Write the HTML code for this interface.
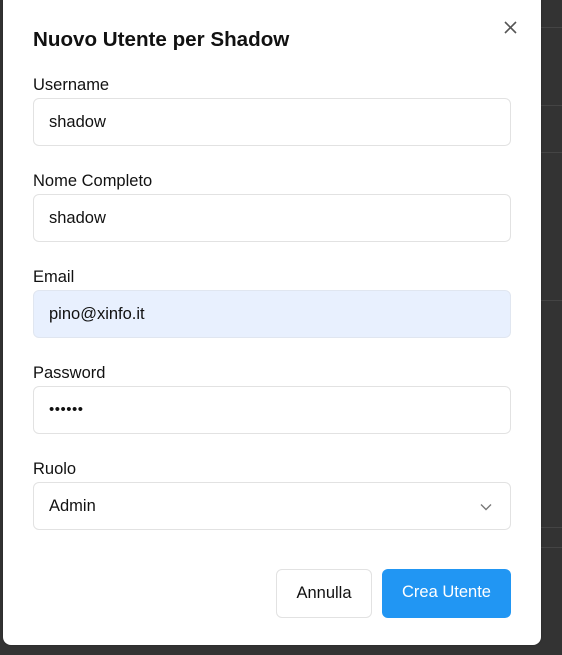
<!DOCTYPE html>
<html><head><style>
*{box-sizing:border-box;margin:0;padding:0}
html,body{width:562px;height:655px;overflow:hidden;background:#333;font-family:"Liberation Sans",Arial,sans-serif}
.line{position:absolute;left:541px;right:0;height:1px;background:#444}
.modal{position:absolute;left:3px;top:-10px;width:538px;height:655px;background:#fff;border-radius:8px;box-shadow:0 0 2px rgba(0,0,0,.3)}
h2{position:absolute;left:30px;top:38px;font-size:20.6px;font-weight:bold;color:#111}
.x{position:absolute;left:500px;top:30px}
.lbl{position:absolute;left:30px;font-size:16.5px;color:#111}
.inp{position:absolute;left:30px;width:478px;height:48px;border:1px solid #e2e2e2;border-radius:6px;padding-left:15px;line-height:46px;font-size:16.5px;color:#111}
.btn{position:absolute;top:579px;height:49px;border-radius:6px;font-size:16.5px;line-height:47px;text-align:center}
</style></head><body>
<div class="line" style="top:27px"></div>
<div class="line" style="top:105px"></div>
<div class="line" style="top:152px"></div>
<div class="line" style="top:300px"></div>
<div class="line" style="top:527px"></div>
<div class="line" style="top:547px"></div>
<div class="modal">
<h2>Nuovo Utente per Shadow</h2>
<svg class="x" width="15" height="15" viewBox="0 0 15 15"><path d="M2 2L13 13M13 2L2 13" stroke="#555" stroke-width="1.6"/></svg>
<div class="lbl" style="top:86px">Username</div>
<div class="inp" style="top:108px">shadow</div>
<div class="lbl" style="top:182px">Nome Completo</div>
<div class="inp" style="top:204px">shadow</div>
<div class="lbl" style="top:278px">Email</div>
<div class="inp" style="top:300px;background:#e8f0fe;border-color:#e0e6f0">pino@xinfo.it</div>
<div class="lbl" style="top:374px">Password</div>
<div class="inp" style="top:396px;font-size:15px;letter-spacing:0.5px">••••••</div>
<div class="lbl" style="top:470px">Ruolo</div>
<div class="inp" style="top:492px">Admin<svg style="position:absolute;right:18px;top:20px" width="12" height="8" viewBox="0 0 12 8"><path d="M1 1.5L6 6.5L11 1.5" stroke="#777" stroke-width="1.4" fill="none"/></svg></div>
<div class="btn" style="left:273px;width:96px;border:1px solid #e2e2e2;color:#111">Annulla</div>
<div class="btn" style="left:379px;width:129px;background:#2196f3;color:#fff">Crea Utente</div>
</div>
</body></html>
